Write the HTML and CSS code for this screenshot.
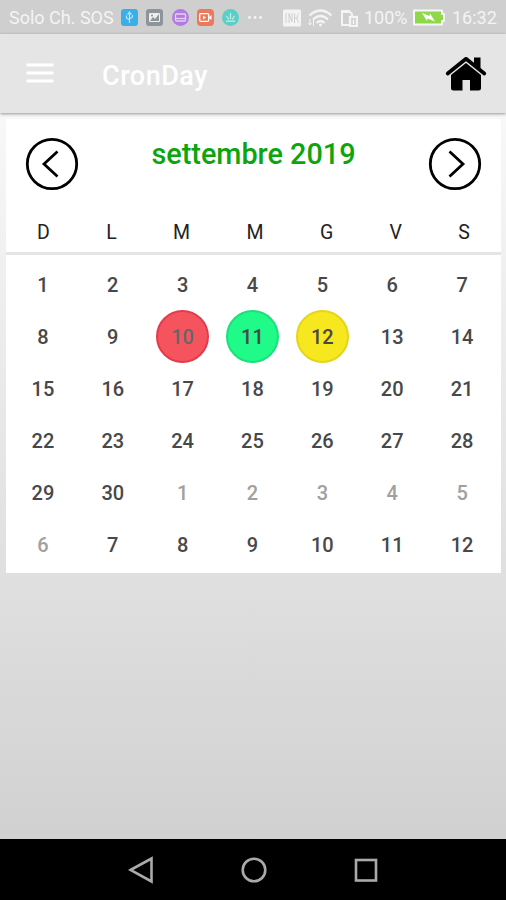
FILE: index.html
```html
<!DOCTYPE html>
<html lang="it">

<head>
  <meta charset="UTF-8">
  <meta name="viewport" content="width=device-width, initial-scale=1.0">
  <title>CronDay</title>
  <link rel="stylesheet" href="styles.css">
</head>

<body>
  <div class="status-bar">
    <span class="carrier">Solo Ch. SOS</span>
    <div class="notifications">
      <svg width="17" height="17" viewBox="0 0 17 17">
        <rect width="17" height="17" rx="3" fill="#39aee8"/>
        <path d="M8.5 14V5M8.5 11L5.5 9V6.5M8.5 10L11.5 8V6M7 5L8.5 3L10 5Z" fill="none" stroke="#b9e4fa" stroke-width="1.2"/>
      </svg>
      <svg width="17" height="17" viewBox="0 0 17 17">
        <rect width="17" height="17" rx="3" fill="#8d959b"/>
        <rect x="3" y="4" width="11" height="9" rx="1" fill="#eceeef"/>
        <path d="M4 12L7 8L9 10L13 5V12Z" fill="#8d959b"/>
        <circle cx="6" cy="6.5" r="1" fill="#8d959b"/>
      </svg>
      <svg width="17" height="17" viewBox="0 0 17 17">
        <circle cx="8.5" cy="8.5" r="8.5" fill="#b37be0"/>
        <rect x="3.5" y="5" width="10" height="7" rx="1" fill="none" stroke="#e6d0f7" stroke-width="1.3"/>
        <path d="M4 9.5H13" stroke="#e6d0f7" stroke-width="1.2"/>
      </svg>
      <svg width="17" height="17" viewBox="0 0 17 17">
        <rect width="17" height="17" rx="4" fill="#ea7a5b"/>
        <rect x="2.7" y="4.7" width="9" height="7.6" rx="1" fill="none" stroke="#fff" stroke-width="1.3"/>
        <path d="M6 6.5L9 8.5L6 10.5ZM11.5 8.5L14.5 6V11Z" fill="#fff"/>
      </svg>
      <svg width="17" height="17" viewBox="0 0 17 17">
        <circle cx="8.5" cy="8.5" r="8.5" fill="#5bcfc6"/>
        <path d="M8.5 4V10M4.5 7L7 10.5M12.5 7L10 10.5M4 12.2H13" fill="none" stroke="#c4f0ec" stroke-width="1.2"/>
      </svg>
      <svg width="16" height="17" viewBox="0 0 16 17" fill="#f4f4f4">
        <circle cx="2.5" cy="8.5" r="1.4"/>
        <circle cx="8" cy="8.5" r="1.4"/>
        <circle cx="13.5" cy="8.5" r="1.4"/>
      </svg>
    </div>
    <div class="system">
      <svg width="18" height="18" viewBox="0 0 18 18">
        <rect y="0.5" width="18" height="17" rx="1.5" fill="#f4f4f4"/>
        <path d="M3 4V14M6 14V4.500L9 13V4M11.500 14V4.500M11.500 9H14M16 4.500Q14 6 14 9T16 13.500" fill="none" stroke="#cfcfcf" stroke-width="1"/>
      </svg>
      <svg width="25" height="18" viewBox="0 0 25 18" fill="none" stroke="#f4f4f4" stroke-width="2.3">
        <path d="M1.500 6.500Q12.500 -3.500 23.500 6.500M5 10.500Q12.500 3.500 20 10.500M8.500 14Q12.500 10 16.500 14"/>
        <circle cx="12.500" cy="16" r="1.500" fill="#f4f4f4" stroke="none"/>
        <path d="M2 10V16M0.300 14L2 16L3.700 14M5.500 17V11" stroke-width="1"/>
      </svg>
      <svg width="18" height="18" viewBox="0 0 18 18" fill="none" stroke="#f4f4f4" stroke-width="2">
        <path d="M9 16H2V2H9L12 5V7"/>
        <path d="M1 2.500H10" stroke-width="3"/>
        <rect x="10" y="8" width="7" height="9" stroke-width="2.300"/>
        <path d="M13.500 10.500V15" stroke-width="1.500"/>
      </svg>
      <span class="percent">100%</span>
      <svg class="battery" width="32" height="17" viewBox="0 0 32 17">
        <path d="M1 1.500H29V5H31V12H29V15.500H1Z" fill="#8fd848" stroke="#f7f7f7" stroke-width="2" stroke-linejoin="round"/>
        <path d="M9 4L16.500 7L17 4.500L22 12.500L14.500 9.500L14 12Z" fill="#fff"/>
      </svg>
      <span class="time">16:32</span>
    </div>
  </div>

  <header class="app-bar">
    <svg class="menu-icon" width="28" height="20" viewBox="0 0 28 20">
      <path d="M0.500 2H27.500M0.500 10H27.500M0.500 18H27.500" stroke="#fff" stroke-width="2.800"/>
    </svg>
    <h1>CronDay</h1>
    <svg class="home-icon" width="42" height="36" viewBox="0 0 42 36">
      <path d="M29 1.500H35.500V15L29 9Z"/>
      <path d="M2.700 17.500L21 2.800L39.300 17.500" fill="none" stroke="#000" stroke-width="3.700" stroke-linecap="round" stroke-linejoin="round"/>
      <path d="M21 7L36 19V32Q36 34.500 33.500 34.500H25V24H17.500V34.500H8.500Q6 34.500 6 32V19Z"/>
    </svg>
  </header>

  <main>
    <div class="calendar">
      <div class="month">
        <svg width="54" height="54" viewBox="0 0 54 54">
          <circle cx="27" cy="27" r="24.700"/>
          <path d="M32.500 14.500L19 27L32.500 39.500"/>
        </svg>
        <h2>settembre 2019</h2>
        <svg width="54" height="54" viewBox="0 0 54 54">
          <circle cx="27" cy="27" r="24.700"/>
          <path d="M21.500 14.500L35 27L21.500 39.500"/>
        </svg>
      </div>
      <div class="weekdays">
        <span>D</span><span>L</span><span>M</span><span>M</span><span>G</span><span>V</span><span>S</span>
      </div>
      <div class="days">
        <span>1</span><span>2</span><span>3</span><span>4</span><span>5</span><span>6</span><span>7</span>
        <span>8</span><span>9</span><span class="mark red">10</span><span class="mark green">11</span><span class="mark yellow">12</span><span>13</span><span>14</span>
        <span>15</span><span>16</span><span>17</span><span>18</span><span>19</span><span>20</span><span>21</span>
        <span>22</span><span>23</span><span>24</span><span>25</span><span>26</span><span>27</span><span>28</span>
        <span>29</span><span>30</span><span class="other">1</span><span class="other">2</span><span class="other">3</span><span class="other">4</span><span class="other">5</span>
        <span class="other">6</span><span>7</span><span>8</span><span>9</span><span>10</span><span>11</span><span>12</span>
      </div>
    </div>
  </main>

  <nav class="nav-bar">
    <svg width="26" height="28" viewBox="0 0 26 28">
      <path d="M2.500 14L23.500 2.500V25.500Z"/>
    </svg>
    <svg width="26" height="28" viewBox="0 0 26 28">
      <circle cx="13" cy="14" r="11.300"/>
    </svg>
    <svg width="24" height="28" viewBox="0 0 24 28">
      <rect x="2" y="4" width="20" height="20.500"/>
    </svg>
  </nav>
</body>

</html>
```
FILE: styles.css
```css
body {
  font-family: Roboto, 'Liberation Sans', sans-serif;
  margin: 0;
  height: 900px;
  display: flex;
  flex-direction: column;
  overflow: hidden;
}

svg {
  display: block;
  flex-shrink: 0;
}

.status-bar {
  height: 34px;
  box-sizing: border-box;
  padding: 1px 8px 0 9px;
  display: flex;
  align-items: center;
  background: #cfcfcf;
  color: #f4f4f4;
  font-size: 18px;
  white-space: nowrap;
}

.carrier {
  width: 112px;
}

.notifications {
  display: flex;
  gap: 8.3px;
}

.system {
  margin-left: auto;
  display: flex;
  align-items: center;
  gap: 7px;
}

.percent {
  width: 44px;
  margin-left: -1px;
}

.battery {
  margin-left: -2px;
}

.time {
  width: 46px;
}

.app-bar {
  height: 79px;
  box-sizing: border-box;
  padding: 0 19px 0 26px;
  display: flex;
  align-items: center;
  background: #e5e5e5;
  box-shadow: 0 1px 3px rgba(0, 0, 0, 0.4);
  z-index: 1;
}

.menu-icon {
  margin-bottom: 1px;
}

.app-bar h1 {
  margin: 4px 0 0 48px;
  font-size: 27px;
  font-weight: 500;
  letter-spacing: 0.5px;
  color: #fff;
}

.home-icon {
  margin-left: auto;
}

main {
  flex-grow: 1;
  padding: 6px 5px 0 6px;
  background: linear-gradient(to bottom, #f8f8f8, #d1d1d1);
}

.calendar {
  height: 454px;
  background: #fff;
}

.month {
  height: 97px;
  box-sizing: border-box;
  padding: 18px 19px 0;
  display: flex;
  justify-content: space-between;
}

.month svg {
  fill: none;
  stroke: #000;
  stroke-width: 2.8;
}

.month h2 {
  margin: 0;
  font-size: 28.8px;
  line-height: 34px;
  font-weight: 500;
  color: #0ca50c;
}

.weekdays {
  height: 36px;
  box-sizing: content-box;
  padding: 0 31px;
  display: flex;
  justify-content: space-between;
  font-size: 19.5px;
  line-height: 34px;
  color: #222;
  border-bottom: 3px solid #e5e5e5;
}

.days {
  padding: 4px 4px 0 2px;
  display: grid;
  grid-template-columns: repeat(7, 1fr);
  grid-auto-rows: 52px;
  justify-items: center;
  font-size: 20px;
  font-weight: 500;
  line-height: 52px;
  color: #484848;
}

.days span {
  width: 53px;
  text-align: center;
}

.days .other {
  color: #a0a0a0;
}

.days .mark {
  height: 53px;
  box-sizing: border-box;
  border: 2px solid;
  border-radius: 50%;
  line-height: 50px;
  margin-top: -1px;
}

.mark.red {
  background: #f5545f;
  border-color: #e23b4b;
  color: #666;
}

.mark.green {
  background: #1ffa88;
  border-color: #1ce07a;
}

.mark.yellow {
  background: #f7e71f;
  border-color: #e3d51c;
}

.nav-bar {
  height: 61px;
  box-sizing: border-box;
  padding: 0 128px;
  display: flex;
  justify-content: space-between;
  align-items: center;
  background: #000;
}

.nav-bar svg {
  fill: none;
  stroke: #aaa;
  stroke-width: 2.6;
}
```
